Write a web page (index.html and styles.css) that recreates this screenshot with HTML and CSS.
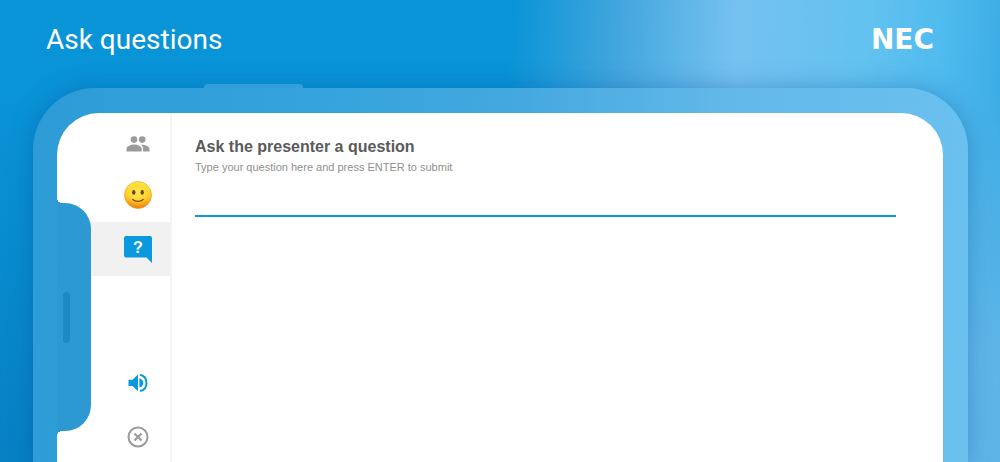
FILE: index.html
```html
<!DOCTYPE html>
<html lang="en">
<head>
    <meta charset="UTF-8">
    <meta name="viewport" content="width=device-width, initial-scale=1.0">
    <title>Ask questions</title>
    <link rel="stylesheet" href="styles.css">
</head>
<body>
    <header class="header">
        <h1>Ask questions</h1>
        <div class="logo">NEC</div>
    </header>
    <div class="phone">
        <div class="side-button"></div>
        <main class="screen">
            <nav class="sidebar">
                <button class="tab people" aria-label="Participants">
                    <svg width="24" height="16" viewBox="0 0 24 16" fill="#9b9b9b">
                        <circle cx="8" cy="3.600" r="3.300"/>
                        <circle cx="16.200" cy="3.600" r="3.300"/>
                        <path d="M0.500 15.500v-2.700c0-2.600 4.300-4.200 7.600-4.200s7.600 1.600 7.600 4.200v2.700z"/>
                        <path d="M14.900 8.700c3.500-.4 8.600 1.300 8.600 4.100v2.700h-6.400v-2.700c0-1.700-.8-3.100-2.200-4.100z"/>
                    </svg>
                </button>
                <button class="tab" aria-label="Reactions">
                    <svg width="28" height="28" viewBox="0 0 28 28">
                        <defs>
                            <linearGradient id="face" x1="0" y1="0" x2="0" y2="1">
                                <stop offset="0" stop-color="#fff04e"/>
                                <stop offset="0.55" stop-color="#ffc928"/>
                                <stop offset="1" stop-color="#ef8010"/>
                            </linearGradient>
                            <radialGradient id="glow" cx="0.5" cy="0.42" r="0.5">
                                <stop offset="0" stop-color="#ffe84f"/>
                                <stop offset="0.6" stop-color="#ffdc38" stop-opacity="0.8"/>
                                <stop offset="1" stop-color="#ffc928" stop-opacity="0"/>
                            </radialGradient>
                        </defs>
                        <circle cx="14" cy="14" r="13.500" fill="url(#face)" stroke="#e8921c" stroke-width="0.6"/>
                        <circle cx="14" cy="14" r="13" fill="url(#glow)"/>
                        <ellipse cx="9.800" cy="11.400" rx="1.700" ry="2.400" fill="#6b4306"/>
                        <ellipse cx="18.200" cy="11.400" rx="1.700" ry="2.400" fill="#6b4306"/>
                        <path d="M8.800 18.500c1.300 1.300 3.200 1.900 5.200 1.900s3.900-.6 5.200-1.900" fill="none" stroke="#7d4e08" stroke-width="1.300" stroke-linecap="round"/>
                    </svg>
                </button>
                <button class="tab active" aria-label="Questions">
                    <svg width="28" height="28" viewBox="0 0 28 28">
                        <path d="M2 1h24q2 0 2 2v25l-5.500-5.500H2q-2 0-2-2V3q0-2 2-2z" fill="#0a99df"/>
                        <text x="14" y="18" class="mark">?</text>
                    </svg>
                </button>
                <button class="tab audio" aria-label="Sound">
                    <svg width="20" height="20" viewBox="0 0 20 20" fill="#0a99df">
                        <path d="M0.500 6.800h4L10 1.400v16.900l-5.500-5.400h-4z"/>
                        <path d="M11.400 5.200c2.400.6 3.900 2.400 3.900 4.700s-1.500 4.100-3.900 4.700z"/>
                        <path d="M12 1.800c3.900.9 6.500 4.100 6.500 8.100s-2.600 7.200-6.500 8.100" fill="none" stroke="#0a99df" stroke-width="2"/>
                    </svg>
                </button>
                <button class="tab" aria-label="Leave">
                    <svg width="22" height="22" viewBox="0 0 22 22" fill="none" stroke="#9b9b9b">
                        <circle cx="11" cy="11" r="9.500" stroke-width="2"/>
                        <path d="M7.500 7.500l7 7M14.500 7.500l-7 7" stroke-width="2.200"/>
                    </svg>
                </button>
            </nav>
            <section class="panel">
                <h2>Ask the presenter a question</h2>
                <label for="question">Type your question here and press ENTER to submit</label>
                <input type="text" id="question">
            </section>
        </main>
        <div class="notch">
            <div class="speaker"></div>
        </div>
    </div>
</body>
</html>
```
FILE: styles.css
```css
* {
    box-sizing: border-box;
}
body {
    margin: 0;
    height: 100vh;
    display: flex;
    flex-direction: column;
    overflow: hidden;
    font-family: "Liberation Sans", Arial, sans-serif;
    background:
        linear-gradient(180deg, rgba(0, 70, 140, 0) 20%, rgba(0, 70, 140, 0.25) 100%) left / 50% 100% no-repeat,
        radial-gradient(ellipse 30% 80% at 100% 100%, rgba(130, 190, 235, 0.5) 30%, rgba(130, 190, 235, 0) 100%),
        linear-gradient(93deg, #0994d7 0%, #0994d7 50%, #3fa5dd 60%, #75c2f0 72%, #62c2f0 85%, #50bbee 92%, #36a9e2 100%);
}
.header {
    height: 88px;
    flex: none;
    display: flex;
    justify-content: space-between;
    align-items: center;
    padding: 0 66px 10px 46px;
    color: white;
}
h1 {
    margin: 0;
    font-family: Roboto, sans-serif;
    font-size: 28px;
    font-weight: 400;
}
.logo {
    font-family: "DejaVu Sans", sans-serif;
    font-size: 28px;
    font-weight: bold;
}
.phone {
    position: relative;
    flex: 1;
    display: flex;
    margin: 0 32px 0 33px;
    padding: 25px 25px 0 24px;
    border-radius: 62px 62px 0 0;
    background: linear-gradient(94deg, #2d9bd5 0%, #35a3dc 30%, #43a8df 50%, #62b8e9 72%, #6bc1ee 100%);
    box-shadow: 0 0 24px rgba(0, 70, 150, 0.35);
}
.side-button {
    position: absolute;
    top: -4px;
    left: 171px;
    width: 99px;
    height: 4px;
    border-radius: 4px 4px 0 0;
    background: #309fda;
}
.screen {
    flex: 1;
    display: flex;
    overflow: hidden;
    background: white;
    border-radius: 42px 42px 0 0;
}
.sidebar {
    flex: none;
    width: 115px;
    padding-top: 7px;
    border-right: 2px solid #f5f5f5;
}
.tab {
    display: flex;
    justify-content: center;
    align-items: center;
    width: 100%;
    height: 54px;
    padding: 0 0 0 48px;
    border: none;
    background: none;
    cursor: pointer;
}
.people {
    height: 48px;
}
.active {
    background: #f1f1f1;
}
.audio {
    margin-top: 80px;
}
.mark {
    fill: white;
    font: bold 16px "Liberation Sans", Arial, sans-serif;
    text-anchor: middle;
}
.panel {
    flex: 1;
    padding: 24px 47px 0 23px;
}
h2 {
    margin: 0;
    font-size: 16px;
    line-height: 20px;
    color: #5a5a5a;
}
label {
    display: block;
    font-size: 11px;
    line-height: 20px;
    color: #909090;
}
input {
    display: block;
    width: 100%;
    height: 40px;
    padding: 0;
    border: none;
    border-bottom: 2px solid #0a99df;
    background: none;
    font: inherit;
    outline: none;
}
.notch {
    position: absolute;
    top: 115px;
    left: 24px;
    width: 34px;
    height: 228px;
    display: flex;
    align-items: center;
    padding-left: 6px;
    border-radius: 0 26px 26px 0;
    background: #2c99d3;
}
/* small curves where the notch meets the frame */
.notch::before,
.notch::after {
    content: "";
    position: absolute;
    left: 0;
    width: 5px;
    height: 5px;
}
.notch::before {
    top: -5px;
    background: radial-gradient(circle at top right, transparent 5px, #2c99d3 5px);
}
.notch::after {
    bottom: -5px;
    background: radial-gradient(circle at bottom right, transparent 5px, #2c99d3 5px);
}
.speaker {
    width: 7px;
    height: 51px;
    border-radius: 4px;
    background: #1b89c2;
}
```
